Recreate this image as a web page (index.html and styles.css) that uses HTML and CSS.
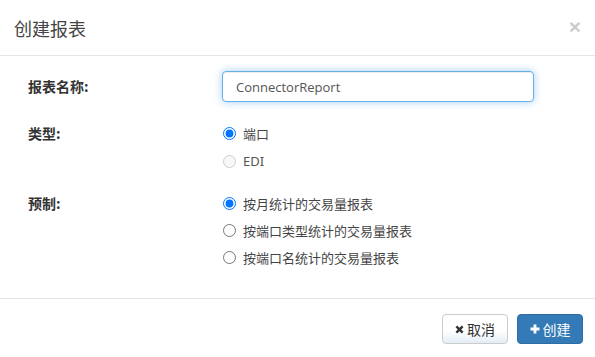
FILE: index.html
```html
<!DOCTYPE html>
<html lang="zh-CN">
<head>
<meta charset="utf-8">
<title>创建报表</title>
<link rel="stylesheet" href="styles.css">
</head>
<body>
<div class="modal">
  <div class="modal-header">
    <h4 class="modal-title">创建报表</h4>
    <span class="close">×</span>
  </div>
  <div class="modal-body">
    <div class="form-row row-name">
      <label class="form-label">报表名称:</label>
      <div class="form-control-wrap">
        <input class="form-input" type="text" value="ConnectorReport">
      </div>
    </div>
    <div class="form-row row-type">
      <label class="form-label">类型:</label>
      <div class="radio-group type-group">
        <label class="radio"><input type="radio" name="type" checked><span>端口</span></label>
        <label class="radio disabled"><input type="radio" name="type" disabled><span>EDI</span></label>
      </div>
    </div>
    <div class="form-row row-preset">
      <label class="form-label">预制:</label>
      <div class="radio-group preset-group">
        <label class="radio"><input type="radio" name="preset" checked><span>按月统计的交易量报表</span></label>
        <label class="radio"><input type="radio" name="preset"><span>按端口类型统计的交易量报表</span></label>
        <label class="radio"><input type="radio" name="preset"><span>按端口名统计的交易量报表</span></label>
      </div>
    </div>
  </div>
  <div class="modal-footer">
    <button class="btn btn-default" type="button">
      <svg class="icon" viewBox="0 0 10 10" width="9" height="9"><path d="M1.5 1.5 L8.5 8.5 M8.5 1.5 L1.5 8.5" stroke="#333" stroke-width="2.6" stroke-linecap="butt"/></svg>取消
    </button>
    <button class="btn btn-primary" type="button">
      <svg class="icon" viewBox="0 0 10 10" width="10" height="10"><path d="M5 0.5 V9.5 M0.5 5 H9.5" stroke="#fff" stroke-width="2.8"/></svg>创建
    </button>
  </div>
</div>
</body>
</html>
```
FILE: styles.css
```css
* { box-sizing: border-box; }
html, body { margin: 0; padding: 0; background: #fff; }
body {
  font-family: "Noto Sans", "Noto Sans CJK SC", sans-serif;
  color: #333;
  width: 595px;
  height: 357px;
  overflow: hidden;
}
.modal { width: 595px; }
.modal-header {
  height: 56px;
  border-bottom: 1px solid #e5e5e5;
  display: flex;
  align-items: center;
  justify-content: space-between;
  padding: 0 14px 0 14px;
}
.modal-title {
  margin: 0;
  font-family: "Noto Sans CJK SC", sans-serif;
  font-weight: 400;
  font-size: 18px;
  color: #444;
  line-height: 24px;
  padding-top: 1px;
}
.close {
  font-family: "Liberation Sans", sans-serif;
  font-size: 21px;
  font-weight: 700;
  color: #000;
  opacity: 0.2;
  line-height: 1;
  margin-top: -3px;
}
.modal-body {
  padding: 15px 0 0 28px;
  height: 242px;
}
.form-row {
  display: grid;
  grid-template-columns: 194px 1fr;
  align-items: start;
}
.form-label {
  font-family: "Noto Sans CJK SC", sans-serif;
  font-weight: 700;
  font-size: 14px;
  color: #333;
  line-height: 20px;
}
.row-name .form-label { padding-top: 5px; }
.form-input {
  display: block;
  width: 312px;
  height: 31px;
  border: 1px solid #66afe9;
  border-radius: 4px;
  padding: 0 13px;
  font-family: "Open Sans", "Noto Sans CJK SC", sans-serif;
  font-size: 13px;
  color: #555;
  outline: 0;
  box-shadow: inset 0 1px 1px rgba(0,0,0,.075), 0 0 8px rgba(102,175,233,.6);
}
.row-type { margin-top: 17px; }
.row-type .form-label { padding-top: 4px; }
.row-preset { margin-top: 15px; }
.row-preset .form-label { padding-top: 3px; }
.radio-group { display: flex; flex-direction: column; }
.radio {
  display: flex;
  align-items: center;
  height: 28px;
  font-family: "Noto Sans", "Noto Sans CJK SC", sans-serif;
  font-size: 13px;
  color: #444;
}
.preset-group .radio { height: 27px; }
.radio input {
  margin: 0 7px 0 1px;
  width: 13px;
  height: 13px;
}
.radio.disabled span { color: #555; }
.modal-footer {
  border-top: 1px solid #e5e5e5;
  padding: 15px 12px 0 0;
  display: flex;
  justify-content: flex-end;
  gap: 9px;
}
.btn {
  height: 30px;
  width: 66px;
  border-radius: 4px;
  font-family: "Noto Sans CJK SC", sans-serif;
  font-size: 14px;
  line-height: 18px;
  padding: 0;
  display: flex;
  align-items: center;
  justify-content: center;
  gap: 3px;
  cursor: pointer;
}
.btn-default {
  color: #333;
  border: 1px solid #ccc;
  background: linear-gradient(#fff 0%, #fff 55%, #e4edf5 100%);
}
.btn-primary {
  color: #fff;
  border: 1px solid #2e6da4;
  background: #337ab7;
}
.icon { display: block; }
```
